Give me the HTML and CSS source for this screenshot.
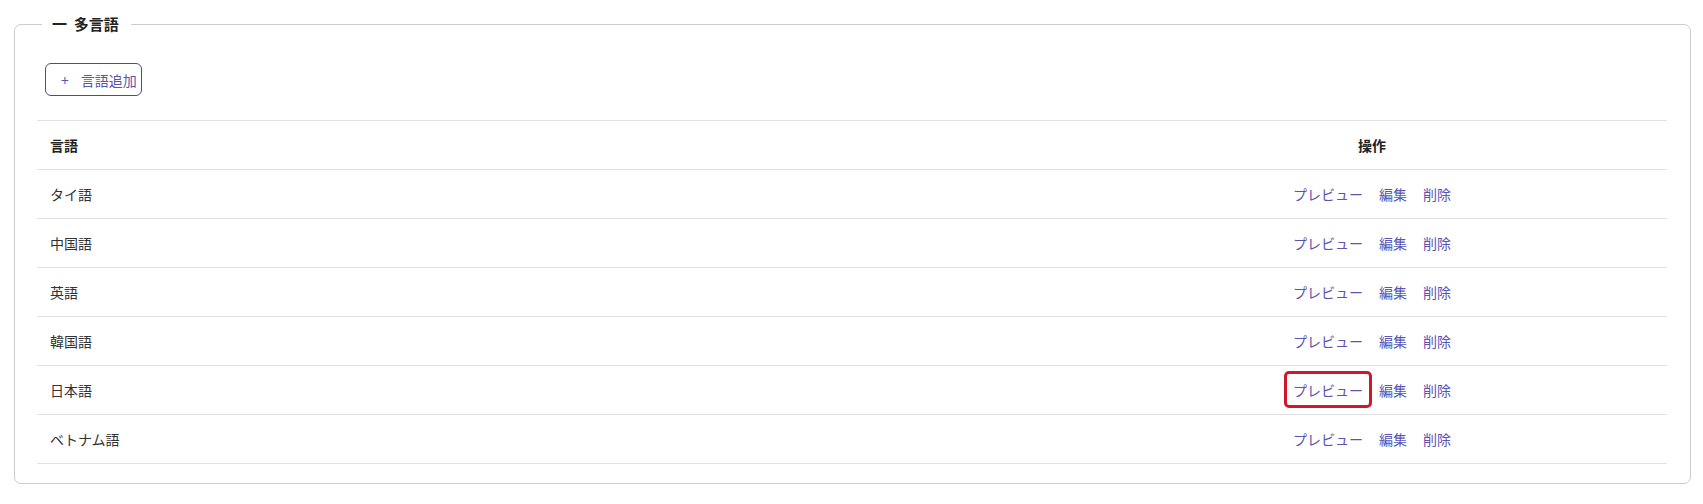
FILE: index.html
```html
<!DOCTYPE html>
<html lang="ja">
<head>
<meta charset="utf-8">
<title>多言語</title>
<link rel="stylesheet" href="styles.css">
</head>
<body>
<fieldset class="panel">
  <legend class="panel-title">一&nbsp; 多言語</legend>
  <div class="toolbar">
    <button class="add-btn" type="button"><span class="plus">+</span>言語追加</button>
  </div>
  <table class="lang-table">
    <thead>
      <tr><th class="col-name">言語</th><th class="col-ops">操作</th></tr>
    </thead>
    <tbody>
      <tr><td>タイ語</td><td class="ops"><a>プレビュー</a><a>編集</a><a>削除</a></td></tr>
      <tr><td>中国語</td><td class="ops"><a>プレビュー</a><a>編集</a><a>削除</a></td></tr>
      <tr><td>英語</td><td class="ops"><a>プレビュー</a><a>編集</a><a>削除</a></td></tr>
      <tr><td>韓国語</td><td class="ops"><a>プレビュー</a><a>編集</a><a>削除</a></td></tr>
      <tr><td>日本語</td><td class="ops"><a class="highlight">プレビュー</a><a>編集</a><a>削除</a></td></tr>
      <tr><td>ベトナム語</td><td class="ops"><a>プレビュー</a><a>編集</a><a>削除</a></td></tr>
    </tbody>
  </table>
</fieldset>
</body>
</html>
```
FILE: styles.css
```css
html, body {
  margin: 0;
  background: #ffffff;
}
html {
  height: 100%;
  overflow: hidden;
}
body {
  box-sizing: border-box;
  height: 100%;
  overflow: hidden;
  padding: 12px 12px 0 14px;
  font-family: "Noto Sans CJK JP", "Noto Sans", sans-serif;
  color: #333333;
  font-size: 14px;
}
.panel {
  margin: 0;
  border: 1px solid #cdcdcd;
  border-radius: 7px;
  padding: 0 23px 19px 22px;
  min-width: 0;
}
.panel-title {
  margin-left: 5px;
  padding: 0 12px 0 10px;
  font-size: 15px;
  font-weight: 700;
  line-height: 24px;
  color: #222222;
}
.toolbar {
  padding: 27px 0 24px 8px;
}
.add-btn {
  display: inline-flex;
  align-items: center;
  box-sizing: border-box;
  height: 33px;
  width: 97px;
  padding: 0 0 0 15px;
  border: 1px solid #4e4b8c;
  border-radius: 6px;
  background: #ffffff;
  color: #5a55b3;
  font-family: inherit;
  font-size: 14px;
  cursor: pointer;
  vertical-align: top;
}
.plus {
  margin-right: 12px;
  font-size: 14px;
}
.lang-table {
  width: 100%;
  border-collapse: separate;
  border-spacing: 0;
}
.lang-table th,
.lang-table td {
  box-sizing: border-box;
  height: 49px;
  padding: 0 0 0 13px;
  border-bottom: 1px solid #e2e2e2;
  text-align: left;
  line-height: 20px;
}
.lang-table th {
  height: 50px;
  border-top: 1px solid #e2e2e2;
  font-weight: 700;
  color: #222222;
}
.lang-table th.col-ops {
  width: 590px;
  text-align: center;
  padding: 0;
}
.lang-table td.ops {
  text-align: center;
  padding: 0;
}
.ops a {
  color: #5a55b3;
  margin: 0 8px;
  cursor: pointer;
  position: relative;
}
.ops a.highlight::after {
  content: "";
  position: absolute;
  left: -9px;
  right: -9px;
  top: -9px;
  bottom: -8px;
  border: 3px solid #d2172a;
  border-radius: 5px;
}
```
